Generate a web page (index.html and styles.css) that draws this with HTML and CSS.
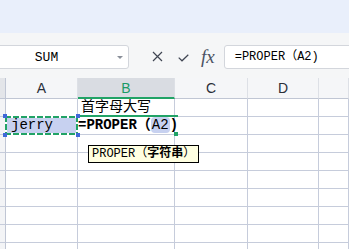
FILE: index.html
```html
<!doctype html>
<html lang="en">
    <head>
        <meta charset="UTF-8" />
        <title>Sheet</title>
        <link rel="stylesheet" href="styles.css">
    </head>
    <body>
        <div class="top-band"></div>

        <div class="formula-bar">
            <div class="name-box">
                <span class="name-text">SUM</span>
                <span class="name-arrow"></span>
            </div>
            <svg class="icon-cancel" width="11" height="11" viewBox="0 0 11 11">
                <path d="M1 1 L10 10 M10 1 L1 10" />
            </svg>
            <svg class="icon-enter" width="11" height="8" viewBox="0 0 11 8">
                <path d="M0.7 3.6 L4 6.8 L10.3 0.7" />
            </svg>
            <span class="icon-fx">fx</span>
            <div class="formula-input">=PROPER（A2)</div>
        </div>

        <div class="sheet">
            <div class="grid">
                <!-- column headers -->
                <div class="col-head corner"></div>
                <div class="col-head">A</div>
                <div class="col-head selected">B</div>
                <div class="col-head">C</div>
                <div class="col-head">D</div>
                <div class="col-head"></div>

                <!-- row 1 -->
                <div class="row-head"></div>
                <div class="cell"></div>
                <div class="cell">首字母大写</div>
                <div class="cell"></div>
                <div class="cell"></div>
                <div class="cell"></div>

                <!-- row 2 -->
                <div class="row-head"></div>
                <div class="cell cell-ref">
                    jerry
                    <span class="handle tl"></span>
                    <span class="handle tr"></span>
                    <span class="handle bl"></span>
                    <span class="handle br"></span>
                </div>
                <div class="cell cell-edit"><b>=PROPER</b><b>（</b><span class="ref-mark">A2</span><b>)</b><span class="fill-handle"></span></div>
                <div class="cell"></div>
                <div class="cell"></div>
                <div class="cell"></div>

                <div class="row-head"></div><div class="cell"></div><div class="cell"></div><div class="cell"></div><div class="cell"></div><div class="cell"></div>
                <div class="row-head"></div><div class="cell"></div><div class="cell"></div><div class="cell"></div><div class="cell"></div><div class="cell"></div>
                <div class="row-head"></div><div class="cell"></div><div class="cell"></div><div class="cell"></div><div class="cell"></div><div class="cell"></div>
                <div class="row-head"></div><div class="cell"></div><div class="cell"></div><div class="cell"></div><div class="cell"></div><div class="cell"></div>
                <div class="row-head"></div><div class="cell"></div><div class="cell"></div><div class="cell"></div><div class="cell"></div><div class="cell"></div>
                <div class="row-head"></div><div class="cell"></div><div class="cell"></div><div class="cell"></div><div class="cell"></div><div class="cell"></div>
                <div class="row-head"></div><div class="cell"></div><div class="cell"></div><div class="cell"></div><div class="cell"></div><div class="cell"></div>
            </div>

            <div class="tooltip">PROPER（<b>字符串</b>）</div>
        </div>
    </body>
</html>
```

FILE: styles.css
```css
html,
body {
    margin: 0;
    padding: 0;
    width: 349px;
    height: 249px;
    overflow: hidden;
    background-color: #ffffff;
    font-family: "Liberation Mono", "Noto Sans CJK SC", monospace;
    color: #000;
}
.top-band {
    height: 33px;
    background-color: #e9effb;
}
.formula-bar {
    height: 45px;
    box-sizing: border-box;
    padding-top: 12px;
    display: flex;
    align-items: flex-start;
    background-color: #f5f6f7;
}
.name-box {
    width: 133px;
    height: 24px;
    margin-left: -4px;
    box-sizing: border-box;
    display: flex;
    align-items: center;
    background-color: #fff;
    border: 1px solid #d3d6dc;
    border-radius: 3px;
}
.name-text {
    flex: 1;
    text-align: center;
    font-size: 13px;
    padding-left: 5px;
    padding-right: 26px;
}
.name-arrow {
    width: 0;
    height: 0;
    margin-right: 5px;
    border-left: 3px solid transparent;
    border-right: 3px solid transparent;
    border-top: 3px solid #8a8f99;
}
.icon-cancel,
.icon-enter {
    fill: none;
    stroke: #3f4552;
    stroke-width: 1.2;
}
.icon-cancel {
    margin: 6px 0 0 23px;
}
.icon-enter {
    margin: 9px 0 0 15px;
}
.icon-fx {
    margin: 2px 0 0 12px;
    font-family: "Liberation Serif", serif;
    font-style: italic;
    font-size: 19px;
    line-height: 20px;
    color: #4b5263;
}
.formula-input {
    flex: 1;
    height: 24px;
    margin-left: 9px;
    margin-right: -4px;
    box-sizing: border-box;
    padding-left: 10px;
    line-height: 22px;
    font-size: 12px;
    background-color: #fff;
    border: 1px solid #d3d6dc;
    border-radius: 3px;
}
.sheet {
    position: relative;
}
.grid {
    display: grid;
    grid-template-columns: 6px 72px 97px 73px 71px 1fr;
    grid-template-rows: 21px;
    grid-auto-rows: 18px;
}
.col-head,
.row-head,
.cell {
    box-sizing: border-box;
    border-bottom: 1px solid #c6ccdb;
}
.col-head {
    display: flex;
    align-items: center;
    justify-content: center;
    font-family: "Liberation Sans", sans-serif;
    font-size: 14px;
    color: #2b2f38;
    background-color: #f5f6f8;
    border-right: 1px solid #dde0e6;
    border-bottom-color: #c0c6d4;
}
.col-head.corner {
    background-color: #e3e5e9;
    border-right-color: #c0c6d4;
}
.col-head.selected {
    background-color: #d9dce2;
    color: #1b9a66;
    border-bottom: 2px solid #21a366;
}
.row-head {
    background-color: #f3f4f6;
    border-right: 1px solid #c0c6d4;
}
.cell {
    border-right: 1px solid #c6ccdb;
    padding-left: 3px;
    font-size: 14px;
    line-height: 17px;
    white-space: nowrap;
}
.cell-ref {
    position: relative;
    z-index: 2;
    padding-left: 5px;
    background-color: #c7d1f0;
}
.cell-ref::after {
    content: "";
    position: absolute;
    top: -1px;
    left: -1px;
    right: -1px;
    bottom: -1px;
    background:
        repeating-linear-gradient(90deg, #21a366 0 6px, #ffffff 6px 8px) top / 100% 2px no-repeat,
        repeating-linear-gradient(90deg, #21a366 0 6px, #ffffff 6px 8px) bottom / 100% 2px no-repeat,
        repeating-linear-gradient(180deg, #21a366 0 6px, #ffffff 6px 8px) left / 2px 100% no-repeat,
        repeating-linear-gradient(180deg, #21a366 0 6px, #ffffff 6px 8px) right / 2px 100% no-repeat;
}
.handle {
    position: absolute;
    z-index: 1;
    width: 4px;
    height: 4px;
    background-color: #3f68d9;
}
.handle.tl { top: -3px; left: -3px; }
.handle.tr { top: -3px; right: -3px; }
.handle.bl { bottom: -3px; left: -3px; }
.handle.br { bottom: -3px; right: -3px; }
.cell-edit {
    position: relative;
    z-index: 1;
    padding-left: 0;
}
.cell-edit::before {
    content: "";
    position: absolute;
    top: -2px;
    left: -1px;
    right: -4px;
    height: 2px;
    background-color: #21a366;
}
.ref-mark {
    padding: 0 1px;
    border-radius: 4px;
    background-color: #c7d1f0;
}
.fill-handle {
    position: absolute;
    right: -4px;
    bottom: -2px;
    width: 4px;
    height: 4px;
    background-color: #21a366;
}
.tooltip {
    position: absolute;
    left: 88px;
    top: 67px;
    z-index: 5;
    padding: 0 3px;
    font-size: 12px;
    line-height: 16px;
    white-space: nowrap;
    background-color: #ffffe1;
    border: 1px solid #000;
}
```
